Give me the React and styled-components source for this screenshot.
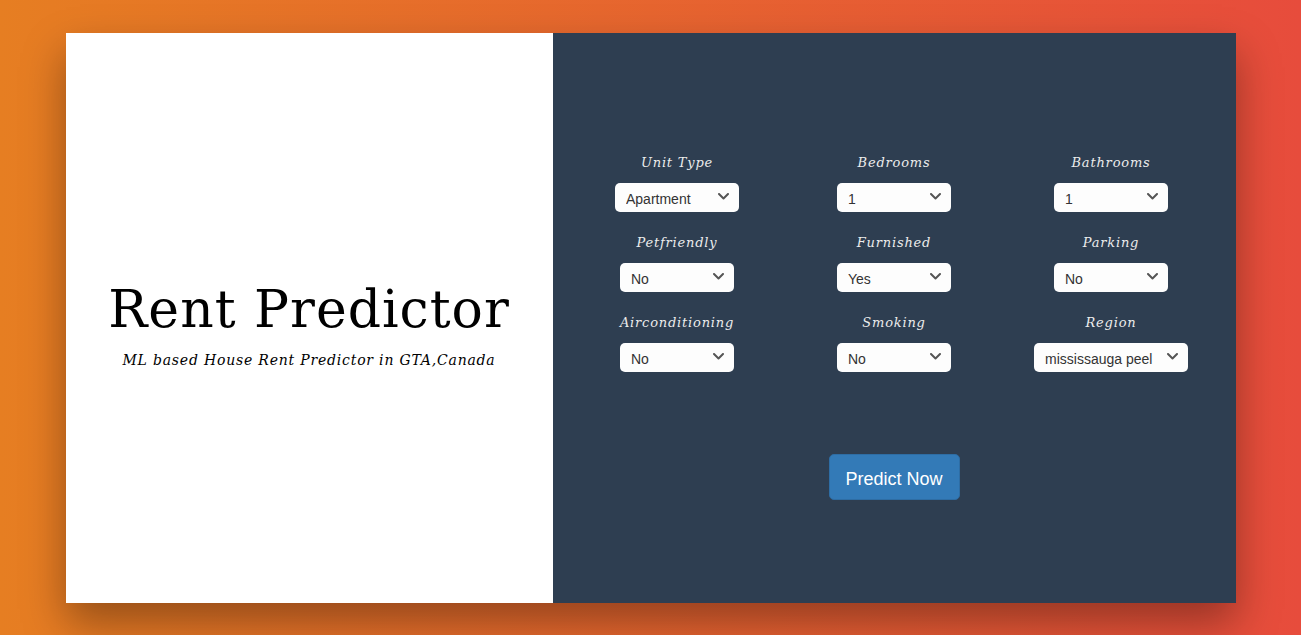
import React, { useState } from "react";
import styled, { createGlobalStyle } from "styled-components";

const GlobalStyle = createGlobalStyle`
  html, body {
    margin: 0;
    padding: 0;
  }
  body {
    background: linear-gradient(to right, #e67e22, #e74c3c);
    min-height: 100vh;
  }
`;

const fields = [
  { name: "Unit Type", options: ["Apartment", "House", "Condo", "Townhouse"], width: 124 },
  { name: "Bedrooms", options: ["1", "2", "3", "4", "5"], width: 114 },
  { name: "Bathrooms", options: ["1", "2", "3", "4"], width: 114 },
  { name: "Petfriendly", options: ["No", "Yes"], width: 114 },
  { name: "Furnished", options: ["Yes", "No"], width: 114 },
  { name: "Parking", options: ["No", "Yes"], width: 114 },
  { name: "Airconditioning", options: ["No", "Yes"], width: 114 },
  { name: "Smoking", options: ["No", "Yes"], width: 114 },
  { name: "Region", options: ["mississauga peel", "toronto", "york region", "durham"], width: 154 },
];

const Chevron = () => (
  <svg width="11" height="7" viewBox="0 0 11 7" fill="none">
    <path d="M1 1l4.5 4.5L10 1" stroke="#555" strokeWidth="2" strokeLinecap="round" strokeLinejoin="round" />
  </svg>
);

const App = () => {
  const [values, setValues] = useState(() =>
    Object.fromEntries(fields.map((f) => [f.name, f.options[0]]))
  );

  return (
    <Page>
      <GlobalStyle />
      <Card>
        <Intro>
          <Title>Rent Predictor</Title>
          <Subtitle>ML based House Rent Predictor in GTA,Canada</Subtitle>
        </Intro>
        <FormPanel>
          <Grid>
            {fields.map((f) => (
              <Field key={f.name}>
                <Label>{f.name}</Label>
                <SelectWrap $width={f.width}>
                  <Select
                    value={values[f.name]}
                    onChange={(e) => setValues({ ...values, [f.name]: e.target.value })}
                  >
                    {f.options.map((o) => (
                      <option key={o}>{o}</option>
                    ))}
                  </Select>
                  <Arrow>
                    <Chevron />
                  </Arrow>
                </SelectWrap>
              </Field>
            ))}
          </Grid>
          <Button type="button">Predict Now</Button>
        </FormPanel>
      </Card>
    </Page>
  );
};

const Page = styled.div`
  display: flex;
  justify-content: center;
  padding-top: 33px;
`;

const Card = styled.div`
  width: 1170px;
  height: 570px;
  display: flex;
  box-shadow: 0 20px 40px rgba(0, 0, 0, 0.35);
`;

const Intro = styled.div`
  width: 487px;
  background: #fff;
  display: flex;
  flex-direction: column;
  align-items: center;
  justify-content: center;
  padding-top: 10px;
  box-sizing: border-box;
`;

const Title = styled.h1`
  margin: 0;
  font-family: "DejaVu Serif", serif;
  font-weight: normal;
  font-size: 52px;
  line-height: 1.2;
  color: #000;
  letter-spacing: 1px;
`;

const Subtitle = styled.p`
  margin: 12px 0 0;
  font-family: "DejaVu Serif", serif;
  font-style: italic;
  font-size: 14px;
  letter-spacing: 0.8px;
  color: #000;
`;

const FormPanel = styled.div`
  flex: 1;
  background: #2e3e51;
  padding: 119px 16px 0;
  display: flex;
  flex-direction: column;
  align-items: center;
`;

const Grid = styled.div`
  width: 100%;
  display: grid;
  grid-template-columns: repeat(3, 1fr);
  row-gap: 20px;
`;

const Field = styled.div`
  display: flex;
  flex-direction: column;
  align-items: center;
`;

const Label = styled.label`
  font-family: "DejaVu Serif", serif;
  font-style: italic;
  font-size: 13px;
  line-height: 20px;
  letter-spacing: 0.8px;
  color: #ececec;
  padding-top: 1px;
  margin-bottom: 10px;
`;

const SelectWrap = styled.div`
  position: relative;
  width: ${(p) => p.$width}px;
  height: 29px;
`;

const Select = styled.select`
  appearance: none;
  width: 100%;
  height: 100%;
  border: none;
  border-radius: 5px;
  background: #fdfdfd;
  font-family: "Liberation Sans", Arial, sans-serif;
  font-size: 14px;
  color: #333;
  padding: 3px 26px 0 11px;
  outline: none;
`;

const Arrow = styled.span`
  position: absolute;
  right: 10px;
  top: 10px;
  pointer-events: none;
  display: flex;
`;

const Button = styled.button`
  margin-top: 82px;
  width: 131px;
  height: 46px;
  background: #337ab7;
  border: 1px solid #2e6da4;
  border-radius: 5px;
  color: #fff;
  font-family: "Liberation Sans", Arial, sans-serif;
  font-size: 18px;
  padding-top: 5px;
  cursor: pointer;
`;

export default App;
